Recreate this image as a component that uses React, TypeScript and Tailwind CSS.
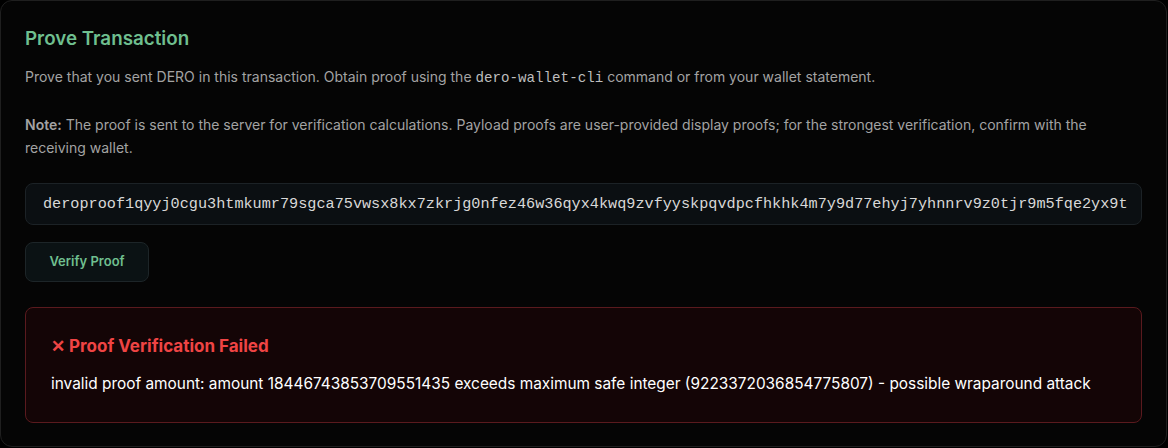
export default function App() {
  return (
    <div className="h-[448px] w-[1168px] bg-black font-['Inter',sans-serif]">
      <div className="h-[447px] w-[1167px] rounded-xl border border-[#1f1f1f] bg-[#050505] px-6 pt-6">
        <h2 className="text-[18.8px] font-semibold leading-7 text-[#6fbf8f]">Prove Transaction</h2>
        <p className="mt-3 text-sm leading-[23px] text-[#a3a3a3]">
          Prove that you sent DERO in this transaction. Obtain proof using the{" "}
          <code className="font-['Liberation_Mono',monospace] text-[14.2px] text-[#bdbdbd]">dero-wallet-cli</code> command or from your
          wallet statement.
        </p>
        <p className="mt-[23px] text-sm leading-[23px] text-[#a3a3a3]">
          <strong className="font-semibold">Note:</strong> The proof is sent to the server for verification calculations. Payload proofs are
          user-provided display proofs; for the strongest verification, confirm with the receiving wallet.
        </p>
        <div className="mt-6 flex h-[42px] items-center overflow-hidden whitespace-nowrap rounded-lg border border-[#1c2226] bg-[#0b0f12] px-[17px] font-['Liberation_Mono',monospace] text-[15.2px] text-[#d8d8d8]">
          deroproof1qyyj0cgu3htmkumr79sgca75vwsx8kx7zkrjg0nfez46w36qyx4kwq9zvfyyskpqvdpcfhkhk4m7y9d77ehyj7yhnnrv9z0tjr9m5fqe2yx9t
        </div>
        <button className="mt-[17px] h-10 w-[124px] rounded-lg border border-[#1d2528] bg-[#0b1214] text-[13px] font-semibold text-[#6fbf8f]">
          Verify Proof
        </button>
        <div className="mt-[25px] rounded-lg border border-[#5a1a1e] bg-[#140506] px-[25px] pb-[27px] pt-[26px]">
          <div className="text-[17px] font-bold leading-6 text-[#ef4444]">✕ Proof Verification Failed</div>
          <p className="mt-[15px] text-[15.4px] leading-[22px] text-white">
            invalid proof amount: amount 18446743853709551435 exceeds maximum safe integer (9223372036854775807) - possible wraparound attack
          </p>
        </div>
      </div>
    </div>
  );
}
